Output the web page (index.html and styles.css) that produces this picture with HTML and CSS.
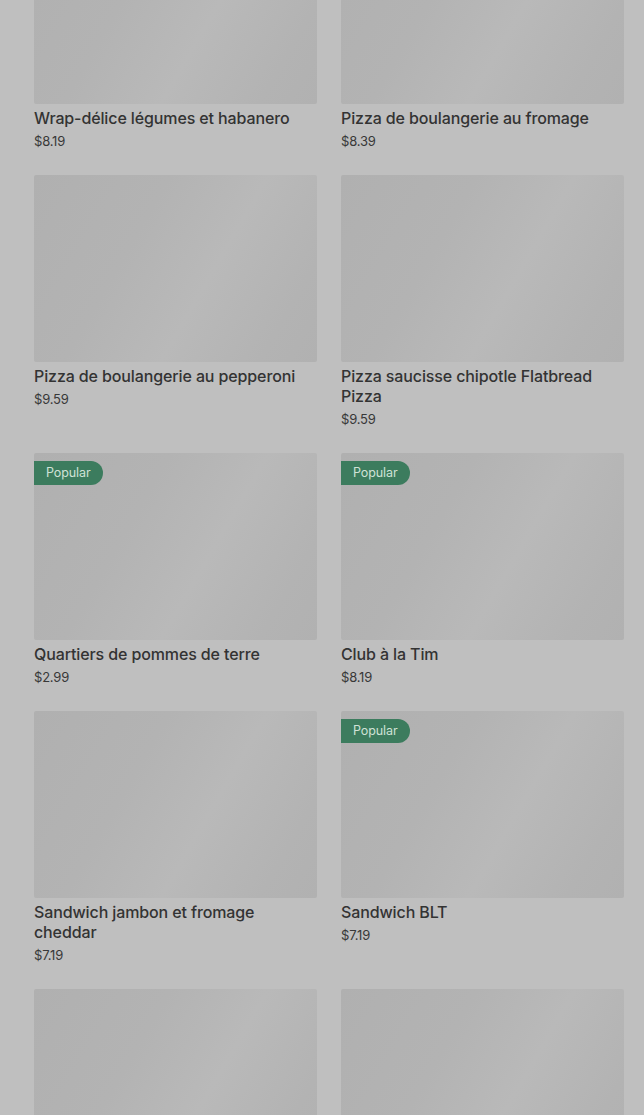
FILE: index.html
```html
<!DOCTYPE html>
<html lang="fr">
<head>
<meta charset="utf-8">
<link rel="stylesheet" href="styles.css">
</head>
<body>
<main class="grid">
  <article class="card"><div class="thumb"></div><h3 class="name">Wrap-délice légumes et habanero</h3><p class="price">$8.19</p></article>
  <article class="card"><div class="thumb"></div><h3 class="name">Pizza de boulangerie au fromage</h3><p class="price">$8.39</p></article>
  <article class="card"><div class="thumb"></div><h3 class="name">Pizza de boulangerie au pepperoni</h3><p class="price">$9.59</p></article>
  <article class="card"><div class="thumb"></div><h3 class="name">Pizza saucisse chipotle Flatbread Pizza</h3><p class="price">$9.59</p></article>
  <article class="card"><div class="thumb"><span class="badge">Popular</span></div><h3 class="name">Quartiers de pommes de terre</h3><p class="price">$2.99</p></article>
  <article class="card"><div class="thumb"><span class="badge">Popular</span></div><h3 class="name">Club à la Tim</h3><p class="price">$8.19</p></article>
  <article class="card"><div class="thumb"></div><h3 class="name">Sandwich jambon et fromage cheddar</h3><p class="price">$7.19</p></article>
  <article class="card"><div class="thumb"><span class="badge">Popular</span></div><h3 class="name">Sandwich BLT</h3><p class="price">$7.19</p></article>
  <article class="card"><div class="thumb"></div></article>
  <article class="card"><div class="thumb"></div></article>
</main>
</body>
</html>
```
FILE: styles.css
```css
html, body {
  margin: 0;
  padding: 0;
  background: #bfbfbf;
  overflow: hidden;
  height: 1115px;
}
body {
  font-family: Inter, "Noto Sans", sans-serif;
  color: #333;
}
.grid {
  display: grid;
  grid-template-columns: 283px 283px;
  column-gap: 24px;
  row-gap: 24px;
  padding: 0 20px 0 34px;
  margin-top: -83px;
}
.card {
  margin: 0;
}
.thumb {
  position: relative;
  height: 187px;
  border-radius: 2px;
  background: linear-gradient(120deg, #b0b0b0 0%, #b3b3b3 35%, #b9b9b9 60%, #b3b3b3 85%, #b1b1b1 100%);
}
.badge {
  position: absolute;
  left: 0;
  top: 8px;
  height: 24px;
  line-height: 24px;
  padding: 0 12px 0 12px;
  background: #3c7c5e;
  color: #cfe2d6;
  font-size: 12.5px;
  letter-spacing: -0.1px;
  border-radius: 0 12px 12px 0;
}
.name {
  margin: 4px 0 0;
  font-size: 16px;
  line-height: 20px;
  font-weight: 500;
  letter-spacing: -0.12px;
  color: #333;
}
.price {
  margin: 3px 0 0;
  font-size: 13px;
  line-height: 20px;
  letter-spacing: -0.2px;
  color: #383838;
}
```
